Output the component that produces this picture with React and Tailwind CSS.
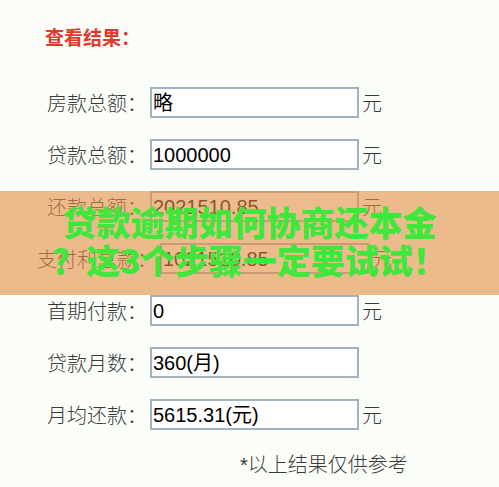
import React from "react";

const rows = [
  { label: "房款总额：", value: "略", unit: true },
  { label: "贷款总额：", value: "1000000", unit: true },
  { label: "还款总额：", value: "2021510.85", unit: true },
  { label: "支付利息款：", value: "1021510.85", unit: true, wide: true },
  { label: "首期付款：", value: "0", unit: true },
  { label: "贷款月数：", value: "360(月)", unit: false },
  { label: "月均还款：", value: "5615.31(元)", unit: true },
];

const cjk = { fontFamily: '"Noto Sans CJK SC", "Noto Sans", sans-serif' };
const latin = { fontFamily: '"Liberation Sans", "Noto Sans CJK SC", sans-serif' };

export default function App() {
  return (
    <div className="relative min-h-screen w-full bg-[#fbfef8] text-[#3a3a3a]" style={cjk}>
      {/* Header */}
      <div className="pl-[45px] pt-[24px] text-[19px] leading-[26px] font-bold text-[#e2392f]">
        查看结果：
      </div>

      {/* Result rows */}
      <div className="mt-[37px] flex flex-col gap-[21px]">
        {rows.map((row) => (
          <div
            key={row.label}
            className={`flex h-[31px] items-center ${row.wide ? "pl-[37px]" : "pl-[47px]"}`}
          >
            <span className={`text-[20px] font-light leading-none ${row.wide ? "w-[120px]" : "w-[100px]"}`}>
              {row.label}
            </span>
            <div
              className="ml-[3px] flex h-[31px] w-[209px] items-center border-2 border-[#a3b2bf] bg-white pl-[1px] text-[20px] text-black"
              style={latin}
            >
              {row.value}
            </div>
            {row.unit && (
              <span className="ml-[3px] text-[20px] font-light leading-none">元</span>
            )}
          </div>
        ))}
      </div>

      {/* Footer note */}
      <div className="mt-[21px] pl-[240px] text-[20px] font-light leading-[26px]">
        <span style={latin}>*</span>以上结果仅供参考
      </div>

      {/* Overlay banner */}
      <div className="absolute left-0 right-0 top-[191px] flex h-[104px] flex-col items-center justify-center bg-[#e28e42]/60 pb-[4px]">
        <div className="text-[34px] font-black leading-[38px] text-[#3fe63b]">贷款逾期如何协商还本金</div>
        <div className="text-[34px] font-black leading-[38px] text-[#3fe63b]">？这3个步骤一定要试试！</div>
      </div>
    </div>
  );
}
